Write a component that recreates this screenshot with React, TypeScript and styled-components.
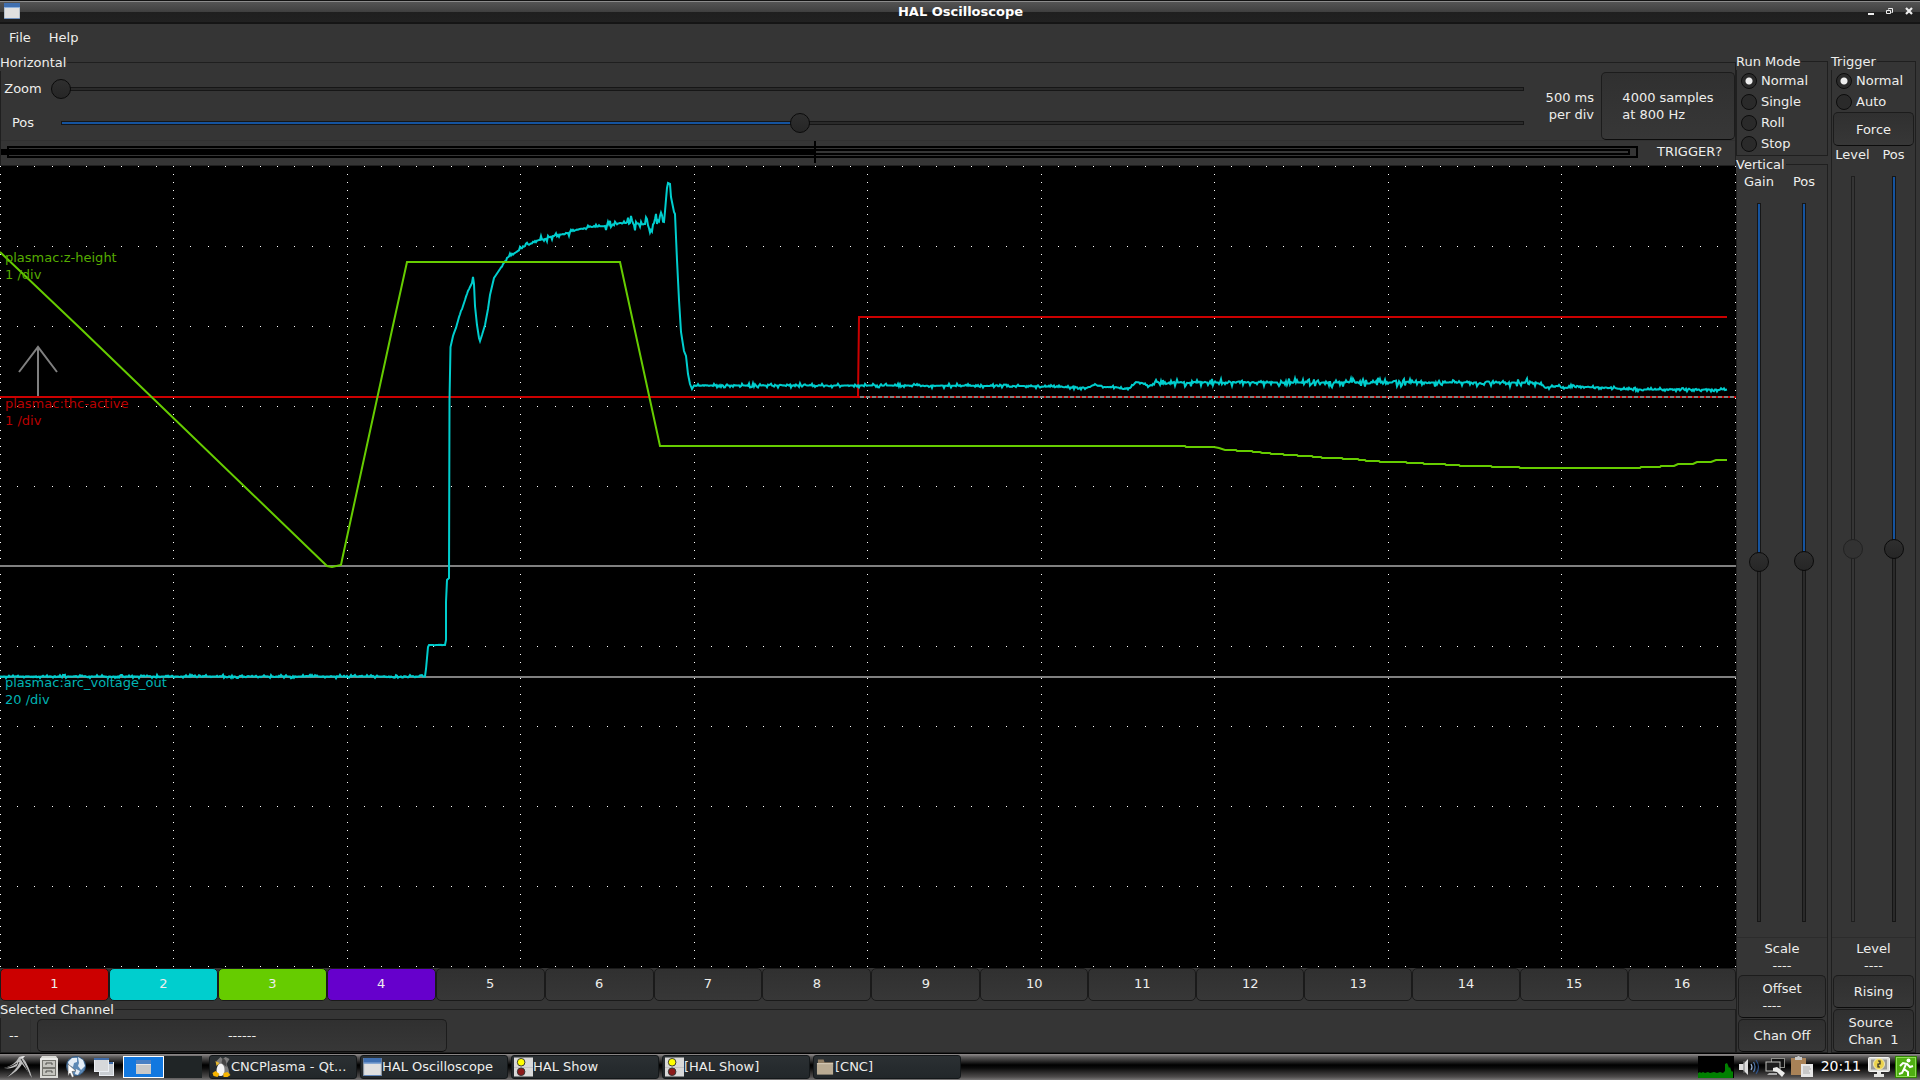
import React, { useId, useState } from "react";
import styled, { createGlobalStyle, css } from "styled-components";

const GlobalStyle = createGlobalStyle`
  * { box-sizing: border-box; }
  body {
    margin: 0;
    background: #353535;
    color: #eeeeec;
    font-family: "DejaVu Sans", sans-serif;
    font-size: 13px;
    line-height: 17px;
  }
  button, input { font: inherit; color: inherit; }
`;

/* ---------- window frame ---------- */

const Window = styled.div`
  display: flex;
  flex-direction: column;
  height: 100vh;
  min-height: 640px;
  overflow: hidden;
`;

const TitleBar = styled.header`
  display: grid;
  grid-template-columns: 1fr auto 1fr;
  align-items: center;
  height: 24px;
  flex: none;
  padding: 0 3px 1px 4px;
  border-bottom: 1px solid #151515;
  background: linear-gradient(#111 0 1px, #8c8c8c 1px 2px, #545454 2px, #3f3f3f 12px, #1f1f1f 12px, #212121 22px, #151515 22px);
`;

const Title = styled.h1`
  margin: 0;
  font-size: 13px;
  font-weight: bold;
  color: #fff;
`;

const WindowButtons = styled.div`
  display: flex;
  justify-content: flex-end;
  gap: 3px;
`;

const WindowButton = styled.button`
  display: grid;
  place-items: center;
  width: 16px;
  height: 16px;
  padding: 0;
  border: 0;
  background: none;
`;

const MenuBar = styled.nav`
  display: flex;
  flex: none;
  height: 29px;
  padding: 4px 0 0;
`;

const MenuButton = styled.button`
  height: 18px;
  padding: 0 9px;
  border: 0;
  background: none;
`;

const Body = styled.main`
  display: flex;
  flex: 1;
  min-height: 0;
  padding-right: 4px;
`;

const Scope = styled.div`
  display: flex;
  flex-direction: column;
  flex: 1;
  min-width: 0;
  padding-top: 1px;
`;

const Side = styled.div<{ $width: number; $gap?: number }>`
  display: flex;
  flex-direction: column;
  flex: none;
  width: ${(p) => p.$width}px;
  padding-right: ${(p) => p.$gap || 0}px;
`;

const Frame = styled.fieldset<{ $grow?: boolean }>`
  display: flex;
  flex-direction: column;
  min-width: 0;
  min-height: 0;
  margin: 0;
  padding: 0;
  border: 1px solid #1f1f1f;
  ${(p) => p.$grow && css`flex: 1;`}
`;

const Legend = styled.legend`
  height: 17px;
  margin-left: -1px;
  padding: 0 1px 0 0;
  background: #353535;
`;

const PushButton = styled.button<{ $height: number; $left?: boolean }>`
  display: flex;
  align-items: center;
  justify-content: center;
  flex: none;
  height: ${(p) => p.$height}px;
  padding: 0 6px;
  border: 1px solid #1c1c1c;
  border-bottom-color: #0c0c0c;
  border-radius: 5px;
  background: linear-gradient(#303030, #373737);
  text-align: ${(p) => (p.$left ? "left" : "center")};
  white-space: pre;
`;

/* ---------- sliders ---------- */

const thumb = css`
  -webkit-appearance: none;
  width: 20px;
  height: 20px;
  border: 1px solid #0a0a0a;
  border-radius: 50%;
  background: linear-gradient(#2f2f2f, #262626);
`;

const Range = styled.input<{ $fill: number }>`
  -webkit-appearance: none;
  appearance: none;
  flex: 1;
  min-width: 0;
  height: 20px;
  margin: 0;
  background:
    linear-gradient(#15539e, #15539e) 11px 9px / calc((100% - 20px) * ${(p) => p.$fill}) 2px no-repeat,
    linear-gradient(#2a2a2a, #2a2a2a) 11px 9px / calc(100% - 22px) 2px no-repeat,
    linear-gradient(#161616, #161616) 10px 8px / calc(100% - 20px) 4px no-repeat;
  &::-webkit-slider-thumb { ${thumb} }
`;

const VRange = styled.input<{ $fill: number }>`
  -webkit-appearance: none;
  appearance: none;
  writing-mode: vertical-lr;
  flex: 1;
  min-height: 0;
  width: 20px;
  margin: 0;
  background:
    linear-gradient(#15539e, #15539e) 9px 11px / 2px calc((100% - 20px) * ${(p) => p.$fill}) no-repeat,
    linear-gradient(#2a2a2a, #2a2a2a) 9px 11px / 2px calc(100% - 22px) no-repeat,
    linear-gradient(#161616, #161616) 8px 10px / 4px calc(100% - 20px) no-repeat;
  &::-webkit-slider-thumb { ${thumb} }
  &:disabled {
    background:
      linear-gradient(#353535, #353535) 9px 11px / 2px calc(100% - 22px) no-repeat,
      linear-gradient(#1f1f1f, #1f1f1f) 8px 10px / 4px calc(100% - 20px) no-repeat;
  }
  &:disabled::-webkit-slider-thumb {
    border-color: #222;
    background: #323232;
  }
`;

const HControls = styled.div`
  display: flex;
  align-items: center;
  height: 69px;
`;

const HSliders = styled.div`
  display: flex;
  flex: 1;
  flex-direction: column;
  gap: 14px;
`;

const HRow = styled.div`
  display: flex;
  align-items: center;
  height: 20px;
`;

const HLabel = styled.label`
  width: 50px;
  padding: 0 8px 1px 2px;
  text-align: center;
`;

const PerDiv = styled.output`
  width: 67px;
  padding-right: 7px;
  text-align: right;
  white-space: pre;
`;

const SamplesButton = styled(PushButton)`
  width: 134px;
`;

const RecordRow = styled.div`
  display: flex;
  align-items: flex-start;
  height: 25px;
  border-top: 1px solid #303030;
`;

const RecordSvg = styled.svg`
  display: block;
  flex: 1;
  min-width: 0;
  height: 23px;
`;

const TriggerState = styled.output`
  width: 96px;
  padding: 2px 0 0 18px;
`;

const VSliders = styled.div<{ $gap: number }>`
  display: flex;
  flex: 1;
  justify-content: center;
  gap: ${(p) => p.$gap}px;
  min-height: 0;
  padding: 0 1px 5px 0;
  border-bottom: 1px solid #2c2c2c;
`;

const VColumn = styled.div`
  display: flex;
  flex-direction: column;
  align-items: center;
  gap: 3px;
  width: 40px;
`;

const Readout = styled.output`
  display: block;
  height: 37px;
  padding-top: 2px;
  text-align: center;
  white-space: pre;
`;

const ButtonStack = styled.div`
  display: flex;
  flex-direction: column;
  gap: 1px;
  padding: 0 1px;
`;

/* ---------- radios ---------- */

const RadioLabel = styled.label`
  display: flex;
  align-items: center;
  gap: 4px;
  height: 21px;
  padding-left: 4px;
`;

const Radio = styled.input`
  -webkit-appearance: none;
  appearance: none;
  width: 16px;
  height: 16px;
  margin: 0;
  border: 1px solid #0c0c0c;
  border-radius: 50%;
  background: #2a2a2a;
  &:checked { background: radial-gradient(circle, #eee 0 3px, #2a2a2a 4px); }
`;

const RadioStack = styled.div<{ $last?: boolean }>`
  padding-bottom: ${(p) => (p.$last ? 1 : 0)}px;
`;

/* ---------- display ---------- */

const Display = styled.section`
  position: relative;
  flex: 1;
  min-height: 0;
  background: #000;
  overflow: hidden;
`;

const Plot = styled.svg`
  display: block;
  width: 100%;
  height: 100%;
`;

const TraceLabel = styled.div<{ $top: string; $color: string }>`
  position: absolute;
  left: 5px;
  top: ${(p) => p.$top};
  color: ${(p) => p.$color};
  white-space: pre;
`;

const Channels = styled.div`
  display: flex;
  flex: none;
  height: 33px;
`;

const Channel = styled.button<{ $color?: string; $grow: number }>`
  flex: ${(p) => p.$grow} 1 0;
  min-width: 0;
  padding: 0 0 2px;
  border: 1px solid #1a1a1a;
  border-radius: 5px;
  background: ${(p) => p.$color || "linear-gradient(#303030, #373737)"};
`;

const SelectedRow = styled.div`
  display: flex;
  align-items: center;
  gap: 6px;
  height: 34px;
`;

const SelectedNumber = styled.output`
  width: 30px;
  height: 33px;
  padding: 8px 0 0 8px;
  border-right: 1px solid #303030;
`;

const SelectedButton = styled(PushButton)`
  width: 410px;
`;

/* ---------- taskbar ---------- */

const Taskbar = styled.footer`
  display: flex;
  align-items: center;
  flex: none;
  height: 27px;
  padding-bottom: 1px;
  border-top: 1px solid #000;
  background: linear-gradient(#918d8d, #5c5a5a 3px, #000 11px, #0b0b0b 14px, #4e4c4c 23px, #7b7979);
`;

const Launchers = styled.div`
  display: flex;
  align-items: center;
  gap: 8px;
  padding-left: 4px;
  width: 123px;
`;

const IconButton = styled.button`
  display: block;
  padding: 0;
  border: 0;
  background: none;
  line-height: 0;
`;

const Pager = styled.div`
  display: flex;
  width: 79px;
  height: 22px;
  margin-right: 7px;
`;

const Desk = styled.button<{ $active?: boolean }>`
  display: grid;
  place-items: center;
  flex: 1;
  padding: 0;
  border: ${(p) => (p.$active ? "1px solid #fff" : "0")};
  background: ${(p) => (p.$active ? "#1278e0" : "#202526")};
`;

const Tasks = styled.div`
  display: flex;
  flex: 1;
  gap: 3px;
  min-width: 0;
`;

const Task = styled.button`
  display: flex;
  align-items: center;
  width: 148px;
  height: 24px;
  padding: 0 2px;
  border: 1px solid #14181a;
  border-radius: 3px;
  background: linear-gradient(#2b3033, #22272a);
  white-space: nowrap;
  & > svg { flex: none; width: 19px; }
`;

const Tray = styled.div`
  display: flex;
  align-items: center;
  gap: 5px;
  padding-right: 3px;
`;

const Clock = styled.time`
  padding: 0 2px 0 3px;
  font-size: 14px;
  color: #fff;
`;

/* ---------- traces ---------- */

type Point = [number, number];

const makeRandom = (seed: number) => () => {
  seed = (seed * 1664525 + 1013904223) % 4294967296;
  return seed / 4294967296;
};

const toPoints = (pts: Point[]) => pts.map(([x, y]) => `${x},${y}`).join(" ");

/* [x, y, noise amplitude from this knot to the next one] */
const arcKnots: [number, number, number][] = [
  [0, 676.5, 1], [425, 676.5, 0], [426, 669, 0], [428, 647, 0], [429, 645, 0.3], [445, 645, 0],
  [446, 640, 0], [446, 602, 0], [447, 580, 0], [449, 578, 0], [449.5, 400, 0], [450.5, 347, 0],
  [453, 336, 0.6], [456, 328, 0.6], [459, 317, 0.6], [463, 306, 0.6], [468, 291, 0.6], [472, 283, 0],
  [473, 277, 0], [474, 284, 0], [475, 306, 0], [477, 325, 0], [479, 338, 0], [480, 341, 0],
  [482, 335, 0], [485, 325, 0], [488, 309, 0], [490, 295, 0], [494, 278, 0.5], [500, 269, 1],
  [507, 258, 1.6], [515, 253, 1.6], [525, 246, 2], [535, 241, 2.2], [545, 239, 2.6], [555, 235, 2.4],
  [565, 234, 2.2], [572, 231, 1.3], [580, 229, 1.3], [592, 227, 1.6], [605, 226, 3], [620, 223, 3.6],
  [630, 223, 5], [645, 224, 5], [651, 230, 4], [655, 219, 6], [664, 222, 2], [667, 188, 1],
  [668, 183, 0], [670, 184, 0], [671, 197, 0], [674, 212, 0], [675, 214, 0], [677, 260, 0],
  [679, 300, 0], [681, 332, 0], [684, 351, 0], [686, 356, 0], [688, 374, 0], [690, 384, 0],
  [692, 389, 0], [694, 385.5, 1.3], [880, 385.5, 1.3], [1020, 386, 1], [1060, 387, 1], [1086, 388, 1],
  [1094, 385, 1], [1104, 387, 1], [1116, 387, 1], [1123, 389, 1], [1130, 388, 1], [1136, 382, 1.5],
  [1142, 383, 1.5], [1149, 386, 1.5], [1157, 382, 2], [1166, 384, 2], [1178, 382.5, 2.4],
  [1300, 382.5, 3], [1390, 382.5, 2.4], [1536, 382.5, 2], [1546, 388, 1.4], [1556, 386, 1],
  [1567, 388, 1], [1574, 385.5, 1], [1585, 387, 1], [1605, 387.5, 1], [1628, 389.5, 1.2],
  [1727, 389.5, 0],
];

const buildArc = (): Point[] => {
  const rnd = makeRandom(7);
  const out: Point[] = [];
  arcKnots.forEach(([x, y, amp], i) => {
    out.push([x, y]);
    const next = arcKnots[i + 1];
    if (!next || amp === 0) return;
    for (let px = Math.floor(x) + 1; px < next[0]; px += 1) {
      const t = (px - x) / (next[0] - x);
      const spike = Math.pow(rnd(), 3) * (rnd() > 0.5 ? 1 : -1);
      out.push([px, Math.round((y + t * (next[1] - y) + spike * amp * 1.7) * 10) / 10]);
    }
  });
  return out;
};

const arcTrace = toPoints(buildArc());

const zTrace = toPoints([
  [0, 252], [81, 329], [327, 566], [332, 567], [341, 565], [342, 560], [392, 330], [407, 262],
  [620, 262], [660, 446], [1185, 446], [1186, 447], [1214, 447], [1219, 448], [1225, 450],
  [1236, 450], [1237, 451], [1252, 451], [1253, 452], [1260, 452], [1262, 453], [1270, 453],
  [1271, 454], [1283, 454], [1284, 455], [1297, 455], [1298, 456], [1312, 456], [1313, 457],
  [1321, 457], [1322, 458], [1342, 458], [1343, 459], [1358, 459], [1359, 460], [1365, 460],
  [1366, 461], [1379, 461], [1380, 462], [1406, 462], [1407, 463], [1423, 463], [1424, 464],
  [1445, 464], [1446, 465], [1459, 465], [1460, 466], [1491, 466], [1492, 467], [1519, 467],
  [1520, 468], [1640, 468], [1641, 467], [1660, 467], [1661, 466], [1674, 466], [1678, 464],
  [1693, 464], [1697, 462], [1711, 462], [1716, 460], [1727, 460],
]);

const gridDots = (() => {
  let d = "";
  for (let row = 0; row <= 10; row += 1) {
    for (let i = 0; i <= 100; i += 1) d += `M${Math.min(1735, Math.floor(i * 17.35))} ${166 + row * 80}h1v1h-1z`;
  }
  for (let col = 0; col <= 10; col += 1) {
    for (let j = 0; j <= 100; j += 1) {
      if (j % 10) d += `M${Math.min(1735, Math.floor(col * 173.5))} ${166 + j * 8}h1v1h-1z`;
    }
  }
  return d;
})();

const at = (y: number) => `calc(100% * ${y - 166} / 802)`;

const ScopeDisplay = () => (
  <Display aria-label="Oscilloscope display">
    <TraceLabel $top={at(249)} $color="#56ac00">{"plasmac:z-height\n1 /div"}</TraceLabel>
    <TraceLabel $top={at(395)} $color="#b80000">{"plasmac:thc-active\n1 /div"}</TraceLabel>
    <TraceLabel $top={at(674)} $color="#00b4b4">{"plasmac:arc_voltage_out\n20 /div"}</TraceLabel>
    <Plot viewBox="0 166 1736 802" preserveAspectRatio="none" fill="none" strokeWidth="2">
      <path d={gridDots} fill="#fff" shapeRendering="crispEdges" />
      <path d="M0 566H1736M0 677H1736" stroke="#808080" />
      <path d="M0 397H1736" stroke="#cc0000" />
      <path d="M860 397H1736" stroke="#808080" strokeDasharray="4 2" />
      <path d="M858 397L859 317H1727" stroke="#cc0000" />
      <path d="M38 396V347M19 372L38 347L57 372" stroke="#808080" />
      <polyline points={arcTrace} stroke="#00cece" />
      <polyline points={zTrace} stroke="#66cc00" />
    </Plot>
  </Display>
);

/* ---------- icons ---------- */

const WindowIcon = ({ size = 16 }: { size?: number }) => (
  <svg width={size} height={size} viewBox="0 0 16 16">
    <rect width="16" height="16" fill="#e0e0e0" />
    <rect width="16" height="5" fill="#3f6fb0" />
    <rect y="4" width="16" height="1" fill="#8db0dc" />
    <path d="M0 5h.6v11H0zM15.400 5H16v11h-.6z" fill="#9ab" />
    <path d="M0 15.300h16v.7H0z" fill="#3f6fb0" />
  </svg>
);

const DeskWindowIcon = () => (
  <svg width="15" height="14" viewBox="0 0 15 14">
    <rect width="15" height="14" fill="#c9c9c9" />
    <rect width="15" height="4" fill="#4a80c4" />
    <path d="M0 4.500h15" stroke="#e8e8e8" />
  </svg>
);

const LxdeIcon = () => (
  <svg width="28" height="24" viewBox="0 0 28 24">
    <path d="M0 13C7 11 12 8 15 2l6-1-2 2c4 5 7 12 9 20l-6-9-4-5c-2 4-8 10-15 13 6-5 9-9 10-11-4 2-8 3-13 2z" fill="#bdbdbd" />
    <path d="M17 4c3 5 6 9 8 15M15 7c-2 6-7 11-12 14M13 8C9 11 5 12 1 13" stroke="#2e2e2e" strokeWidth="1" fill="none" />
    <path d="M15 2l6-1-2 2z" fill="#f2f2f2" />
  </svg>
);

const CabinetIcon = () => (
  <svg width="18" height="22" viewBox="0 0 18 22">
    <path d="M2 0h14l2 3v19H0V3z" fill="#dadad6" />
    <path d="M0 3h18" stroke="#fafafa" />
    <g fill="#c4c4be" stroke="#75756f">
      <rect x="2.500" y="4.500" width="13" height="7" />
      <rect x="2.500" y="12.500" width="13" height="7" />
    </g>
    <path d="M6 9V7h6v2M6 17v-2h6v2" stroke="#4e4e4a" fill="none" />
  </svg>
);

const GlobeIcon = () => (
  <svg width="20" height="22" viewBox="0 0 20 22">
    <circle cx="10" cy="10" r="9.500" fill="#5b88b5" stroke="#34587e" />
    <path d="M2 6l4-4 5 0 0 4-3 1-1 4-4-2zM12 1l5 3 2 6-4 4-3-4 1-3zM10 13l4 2-2 4-3-1z" fill="#e3ecf5" />
    <path d="M2 20V8l8 7-4 .5 2 5-2 1-2-4.500z" fill="#fff" stroke="#555" strokeWidth=".6" />
  </svg>
);

const WindowsIcon = () => (
  <svg width="20" height="20" viewBox="0 0 20 20">
    <g stroke="#e9edf2" strokeWidth="1">
      <rect x="5.500" y="5.500" width="14" height="13" fill="#c9cdd2" />
      <path d="M6 6h13" stroke="#3d6aa8" strokeWidth="2" />
      <rect x=".5" y="1.500" width="14" height="13" fill="#d6d8da" />
      <path d="M0 2h15" stroke="#3d6aa8" strokeWidth="2" />
    </g>
  </svg>
);

const TuxIcon = () => (
  <svg width="18" height="20" viewBox="0 0 18 20">
    <path d="M4 4l4-4 2 2 3-2 4 2-3 5 2 5 1 5-6 2-6-3 2-6z" fill="#7c7c7c" />
    <path d="M10 1c4 1 4 6 4 9l-5-4z" fill="#454545" />
    <path d="M7 7c3-1 5 2 5 6s-2 6-4 6-4-2-4-5 1-6 3-7z" fill="#f4f4f4" />
    <path d="M3 4l4 2-3 3z" fill="#e8b92e" />
    <path d="M0 16l3-2 4 3-2 3-4-1zM11 16l4-1 3 3-3 2h-4z" fill="#f7b500" />
  </svg>
);

const LampsIcon = () => (
  <svg width="20" height="20" viewBox="0 0 20 20">
    <rect width="20" height="20" fill="#d9d9d9" />
    <path d="M0 10.500h20" stroke="#c2c2c2" />
    <circle cx="7.500" cy="5" r="4" fill="#ffff00" stroke="#333" />
    <circle cx="7.500" cy="15" r="4" fill="#8b1a1a" stroke="#333" />
  </svg>
);

const FolderIcon = () => (
  <svg width="20" height="18" viewBox="0 0 20 18">
    <path d="M2 1h6l1 3h9v5H2z" fill="#8d7b62" />
    <path d="M1 5h17v12H1z" fill="#b9ab93" />
    <path d="M1 5.500h17" stroke="#d9cfbd" />
  </svg>
);

const CpuIcon = () => (
  <svg width="36" height="22" viewBox="0 0 36 22">
    <rect width="36" height="22" fill="#000" />
    <path d="M0 22V17l2-1 1 1 2-1 2 1 3-1 2 1 4-1 3 1 3-1 3 1 2-2V8l2-1 1 2 1 3 1-1 1 3 1 2 1-1v7z" fill="#008000" />
  </svg>
);

const SpeakerIcon = () => (
  <svg width="21" height="20" viewBox="0 0 21 20" fill="none">
    <path d="M0 7h4l5-5v16l-5-5H0z" fill="#dcdcdc" />
    <path d="M5 4v12" stroke="#777" />
    <path d="M12 7q2 3 0 6" stroke="#9ab4d8" strokeWidth="1.200" />
    <path d="M14.500 5q3 5 0 10" stroke="#4f78ae" strokeWidth="1.200" />
    <path d="M17 3q5 7 0 14" stroke="#2f5288" strokeWidth="1.200" />
  </svg>
);

const NetworkIcon = () => (
  <svg width="21" height="20" viewBox="0 0 21 20">
    <rect x="6.500" y="1.500" width="13" height="9" fill="#111" stroke="#8c8c88" />
    <rect x="1" y="5" width="14" height="9" fill="#1d1d1d" stroke="#c0c0bb" />
    <path d="M4 16h8v2H2z" fill="#aaa" />
    <path d="M8 11l4-1 8 6-3 4-5-5-4-1z" fill="#eeeeec" />
  </svg>
);

const ClipboardIcon = () => (
  <svg width="22" height="21" viewBox="0 0 22 21">
    <rect y="2" width="15" height="17" fill="#a98257" />
    <path d="M4 3V1h2l1-1h1l1 1h2v3H4z" fill="#c9c9c9" />
    <path d="M10 8h12v13H10z" fill="#e6e6e6" />
    <path d="M12 11h7M12 13h8M12 15h6M12 17h7" stroke="#aaa" />
  </svg>
);

const ScreenIcon = () => (
  <svg width="22" height="20" viewBox="0 0 22 20">
    <rect x=".5" y=".5" width="21" height="14" rx="1" fill="#dcdcd8" stroke="#f4f4f2" />
    <rect x="3" y="2.500" width="16" height="10" fill="#9a9a98" />
    <circle cx="11" cy="7" r="5.500" fill="#ecd24c" stroke="#f0eab8" />
    <path d="M10 4h2v3l-2 0v3h2" fill="none" stroke="#222" strokeWidth="1.200" />
    <path d="M9 15h4v2h3v3H6v-3h3z" fill="#e4e4e2" />
  </svg>
);

const ExitIcon = () => (
  <svg width="22" height="22" viewBox="0 0 22 22">
    <rect x=".5" y=".5" width="21" height="21" fill="#4fae12" stroke="#2f8500" />
    <rect x="1.500" y="1.500" width="19" height="19" fill="none" stroke="#8fdc55" />
    <circle cx="13.500" cy="4.500" r="2" fill="#fff" />
    <path d="M5 10l3-3 4 1 3 3 3-1M11 8l-2 5 4 3v4M9 13l-2 4-3 1" fill="none" stroke="#fff" strokeWidth="2" />
  </svg>
);

/* ---------- controls ---------- */

type SliderProps = { label: string; initial: number; disabled?: boolean };

const HSlider = ({ label, initial }: SliderProps) => {
  const id = useId();
  const [value, setValue] = useState(initial);
  return (
    <HRow>
      <HLabel htmlFor={id}>{label}</HLabel>
      <Range id={id} type="range" min={0} max={1} step="any" value={value} $fill={value}
        onChange={(e) => setValue(Number(e.target.value))} />
    </HRow>
  );
};

const VSlider = ({ label, initial, disabled }: SliderProps) => {
  const id = useId();
  const [value, setValue] = useState(initial);
  return (
    <VColumn>
      <label htmlFor={id}>{label}</label>
      <VRange id={id} type="range" min={0} max={1} step="any" value={value} $fill={value} disabled={disabled}
        onChange={(e) => setValue(Number(e.target.value))} />
    </VColumn>
  );
};

const RadioGroup = ({ name, options, last }: { name: string; options: string[]; last?: boolean }) => (
  <RadioStack $last={last}>
    {options.map((option, i) => (
      <RadioLabel key={option}>
        <Radio type="radio" name={name} defaultChecked={i === 0} />
        {option}
      </RadioLabel>
    ))}
  </RadioStack>
);

const RecordBar = () => (
  <RecordSvg viewBox="1 141 1638 23" preserveAspectRatio="none">
    <rect x="8" y="147" width="1629" height="10" fill="none" stroke="#000" strokeWidth="2" />
    <rect x="0" y="149" width="1630" height="6" fill="#000" />
    <path d="M816 152H1628" stroke="#353535" strokeWidth="2" />
    <path d="M815 141V163" stroke="#000" strokeWidth="2" />
  </RecordSvg>
);

const channelColors = ["#cc0000", "#00cece", "#66cc00", "#6600cc"];

const tasks = [
  { title: "CNCPlasma - Qt...", icon: <TuxIcon /> },
  { title: "HAL Oscilloscope", icon: <WindowIcon size={18} /> },
  { title: "HAL Show", icon: <LampsIcon /> },
  { title: "[HAL Show]", icon: <LampsIcon /> },
  { title: "[CNC]", icon: <FolderIcon /> },
];

export default function App() {
  return (
    <Window>
      <GlobalStyle />
      <TitleBar>
        <WindowIcon />
        <Title>HAL Oscilloscope</Title>
        <WindowButtons>
          <WindowButton aria-label="Minimize">
            <svg width="8" height="8"><path d="M1 6h6v2H1z" fill="#eee" /></svg>
          </WindowButton>
          <WindowButton aria-label="Restore">
            <svg width="8" height="8" fill="none" stroke="#eee"><path d="M2.500 2.500v-1h4v4h-1M.5 3.500h4v3h-4z" /></svg>
          </WindowButton>
          <WindowButton aria-label="Close">
            <svg width="8" height="8"><path d="M1 1l6 6M7 1l-6 6" stroke="#eee" strokeWidth="2.200" /></svg>
          </WindowButton>
        </WindowButtons>
      </TitleBar>
      <MenuBar>
        <MenuButton>File</MenuButton>
        <MenuButton>Help</MenuButton>
      </MenuBar>

      <Body>
        <Scope>
          <Frame>
            <Legend>Horizontal</Legend>
            <HControls>
              <HSliders>
                <HSlider label="Zoom" initial={0} />
                <HSlider label="Pos" initial={0.505} />
              </HSliders>
              <PerDiv>{"500 ms\nper div"}</PerDiv>
              <SamplesButton $height={68} $left>{"4000 samples\nat 800 Hz"}</SamplesButton>
            </HControls>
            <RecordRow>
              <RecordBar />
              <TriggerState>TRIGGER?</TriggerState>
            </RecordRow>
          </Frame>
          <ScopeDisplay />
          <Channels>
            {Array.from({ length: 16 }, (_, i) => (
              <Channel key={i} $color={channelColors[i]} $grow={i < 9 ? 109 : 108}>{i + 1}</Channel>
            ))}
          </Channels>
          <Frame>
            <Legend>Selected Channel</Legend>
            <SelectedRow>
              <SelectedNumber>--</SelectedNumber>
              <SelectedButton $height={33}>------</SelectedButton>
            </SelectedRow>
          </Frame>
        </Scope>

        <Side $width={95} $gap={3}>
          <Frame>
            <Legend>Run Mode</Legend>
            <RadioGroup name="run-mode" options={["Normal", "Single", "Roll", "Stop"]} last />
          </Frame>
          <Frame $grow>
            <Legend>Vertical</Legend>
            <VSliders $gap={5}>
              <VSlider label="Gain" initial={0.499} />
              <VSlider label="Pos" initial={0.498} />
            </VSliders>
            <Readout>{"Scale\n----"}</Readout>
            <ButtonStack>
              <PushButton $height={43} $left>{"Offset\n----"}</PushButton>
              <PushButton $height={33}>Chan Off</PushButton>
            </ButtonStack>
          </Frame>
        </Side>

        <Side $width={85}>
          <Frame $grow>
            <Legend>Trigger</Legend>
            <RadioGroup name="trigger" options={["Normal", "Auto"]} />
            <ButtonStack>
              <PushButton $height={34}>Force</PushButton>
            </ButtonStack>
            <VSliders $gap={1}>
              <VSlider label="Level" initial={0.5} disabled />
              <VSlider label="Pos" initial={0.5} />
            </VSliders>
            <Readout>{"Level\n----"}</Readout>
            <ButtonStack>
              <PushButton $height={33}>Rising</PushButton>
              <PushButton $height={43} $left>{"Source\nChan  1"}</PushButton>
            </ButtonStack>
          </Frame>
        </Side>
      </Body>

      <Taskbar>
        <Launchers>
          <IconButton aria-label="Menu"><LxdeIcon /></IconButton>
          <IconButton aria-label="Files"><CabinetIcon /></IconButton>
          <IconButton aria-label="Browser"><GlobeIcon /></IconButton>
          <IconButton aria-label="Show desktop"><WindowsIcon /></IconButton>
        </Launchers>
        <Pager>
          <Desk $active aria-label="Desktop 1"><DeskWindowIcon /></Desk>
          <Desk aria-label="Desktop 2" />
        </Pager>
        <Tasks>
          {tasks.map((task) => (
            <Task key={task.title}>{task.icon}{task.title}</Task>
          ))}
        </Tasks>
        <Tray>
          <CpuIcon />
          <SpeakerIcon />
          <NetworkIcon />
          <ClipboardIcon />
          <Clock>20:11</Clock>
          <ScreenIcon />
          <ExitIcon />
        </Tray>
      </Taskbar>
    </Window>
  );
}
